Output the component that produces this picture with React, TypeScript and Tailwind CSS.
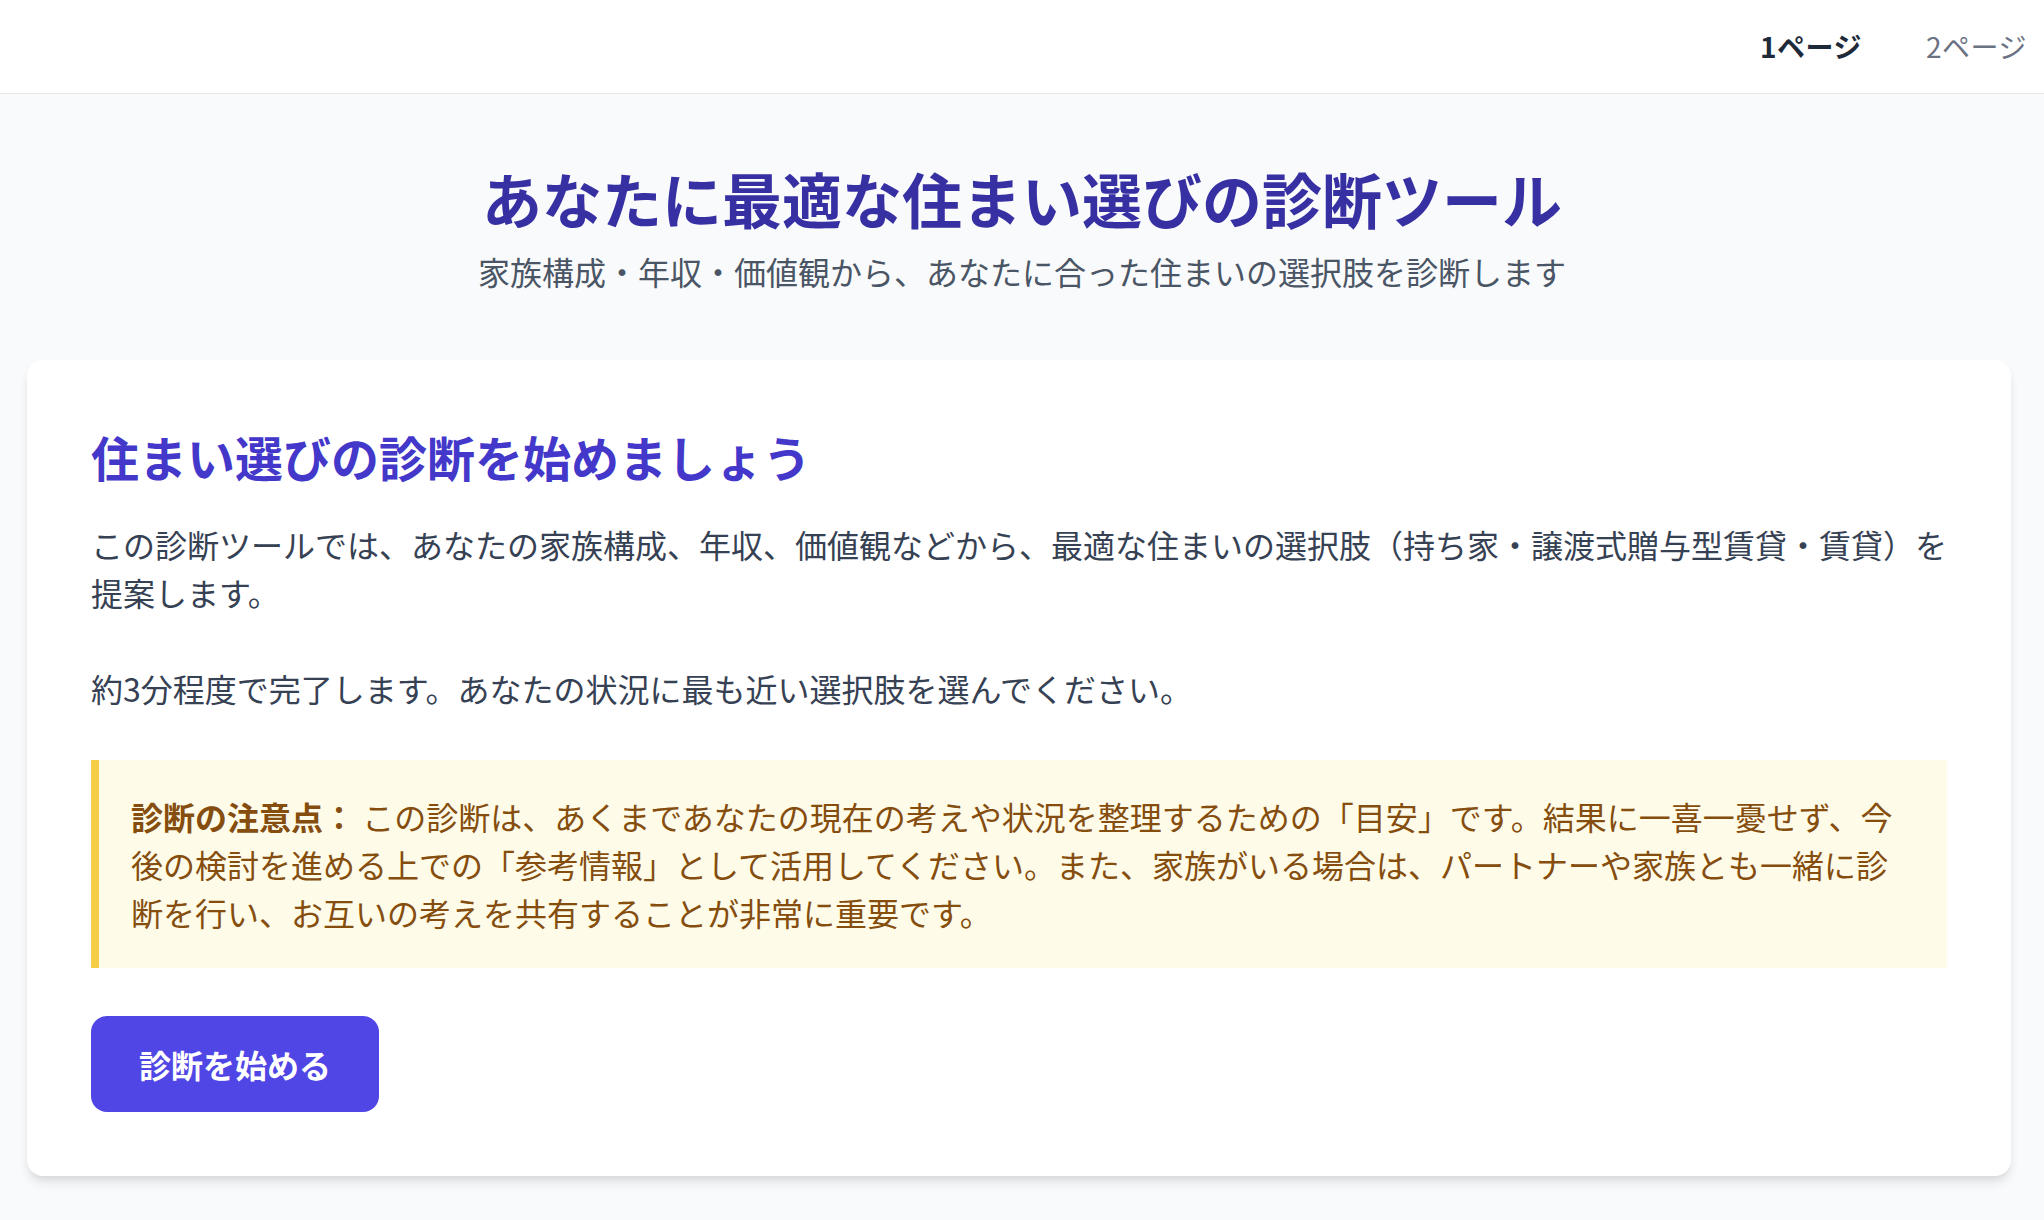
const font = { fontFamily: '"Noto Sans CJK JP", "Noto Sans", sans-serif' };

function Header() {
  return (
    <header className="h-[94px] bg-white border-b border-gray-200 flex items-center justify-end pr-[17px]">
      <nav className="flex items-center gap-[64px] text-[28px] leading-[40px] -translate-y-[1px]">
        <span className="font-bold text-gray-800 tracking-[0.5px]">1ページ</span>
        <span className="text-gray-500 tracking-[0.5px]">2ページ</span>
      </nav>
    </header>
  );
}

export default function App() {
  return (
    <div className="min-h-screen bg-gray-50" style={font}>
      <Header />

      <main>
        {/* Hero */}
        <div className="pt-[68px] text-center">
          <h1 className="text-[60px] leading-[72px] font-bold text-[#3730a3]">
            あなたに最適な住まい選びの診断ツール
          </h1>
          <p className="mt-[13px] text-[32px] leading-[48px] text-gray-600">
            家族構成・年収・価値観から、あなたに合った住まいの選択肢を診断します
          </p>
        </div>

        {/* Card */}
        <section className="mt-[65px] ml-[27px] w-[1984px] rounded-2xl bg-white p-[64px] shadow-[0_8px_12px_-2px_rgba(0,0,0,0.1),0_4px_8px_-4px_rgba(0,0,0,0.1)]">
          <h2 className="text-[48px] leading-[64px] font-bold text-[#4338ca] mb-[32px]">
            住まい選びの診断を始めましょう
          </h2>
          <p className="text-[32px] leading-[48px] text-gray-700 mr-[-6px]">
            この診断ツールでは、あなたの家族構成、年収、価値観などから、最適な住まいの選択肢（持ち家・譲渡式贈与型賃貸・賃貸）を提案します。
          </p>
          <p className="mt-[48px] text-[32px] leading-[48px] text-gray-700">
            約3分程度で完了します。あなたの状況に最も近い選択肢を選んでください。
          </p>

          <div className="mt-[48px] border-l-[8px] border-[#f6cd46] bg-[#fefce8] p-[32px] text-[32px] leading-[48px] text-[#854d0e]">
            <span className="font-bold">診断の注意点：</span>{" "}
            この診断は、あくまであなたの現在の考えや状況を整理するための「目安」です。結果に一喜一憂せず、今後の検討を進める上での「参考情報」として活用してください。また、家族がいる場合は、パートナーや家族とも一緒に診断を行い、お互いの考えを共有することが非常に重要です。
          </div>

          <button className="mt-[48px] rounded-2xl bg-[#4f46e5] px-[48px] py-[24px] text-[32px] leading-[48px] font-bold text-white">
            診断を始める
          </button>
        </section>
      </main>
    </div>
  );
}
